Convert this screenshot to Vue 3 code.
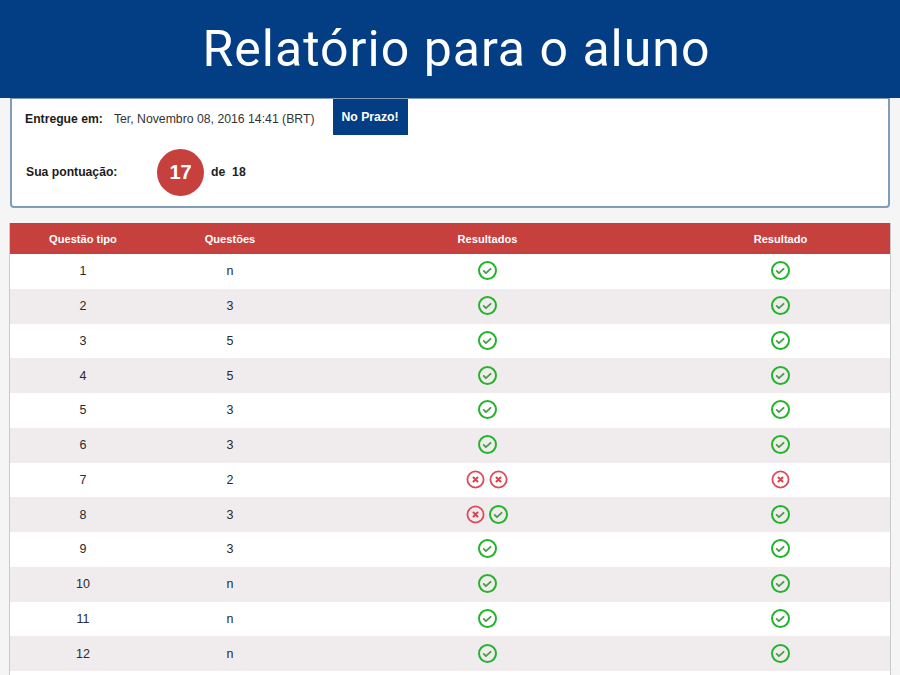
<script setup>
const rows = [
  ['1', 'n', ['ok'], 'ok'],
  ['2', '3', ['ok'], 'ok'],
  ['3', '5', ['ok'], 'ok'],
  ['4', '5', ['ok'], 'ok'],
  ['5', '3', ['ok'], 'ok'],
  ['6', '3', ['ok'], 'ok'],
  ['7', '2', ['bad', 'bad'], 'bad'],
  ['8', '3', ['bad', 'ok'], 'ok'],
  ['9', '3', ['ok'], 'ok'],
  ['10', 'n', ['ok'], 'ok'],
  ['11', 'n', ['ok'], 'ok'],
  ['12', 'n', ['ok'], 'ok']
]
</script>

<template>
  <div class="page">
    <header class="banner">Relatório para o aluno</header>
    <section class="card">
      <div class="line-one">
        <span class="label">Entregue em:</span>
        <span class="date">Ter, Novembro 08, 2016 14:41 (BRT)</span>
        <span class="badge">No Prazo!</span>
      </div>
      <div class="line-two">
        <span class="label score-label">Sua pontuação:</span>
        <span class="score">17</span>
        <span class="total">de&nbsp;&nbsp;18</span>
      </div>
    </section>
    <section class="table">
      <div class="row head">
        <div>Questão tipo</div>
        <div>Questões</div>
        <div>Resultados</div>
        <div>Resultado</div>
      </div>
      <div v-for="r in rows" :key="r[0]" class="row body">
        <div>{{ r[0] }}</div>
        <div>{{ r[1] }}</div>
        <div class="icons" :class="{ pair: r[2].length > 1 }">
          <svg v-for="(s, i) in r[2]" :key="i" class="icon" :class="s" viewBox="0 0 19 19">
            <circle cx="9.5" cy="9.5" :r="s === 'ok' ? 8.5 : 8.1" />
            <path v-if="s === 'ok'" d="M5.7 9.9l2.2 2.2 4.7-4.3" />
            <path v-else class="x" d="M7.5 7.5l4 4M11.5 7.5l-4 4" />
          </svg>
        </div>
        <div class="icons">
          <svg class="icon" :class="r[3]" viewBox="0 0 19 19">
            <circle cx="9.5" cy="9.5" :r="r[3] === 'ok' ? 8.5 : 8.1" />
            <path v-if="r[3] === 'ok'" d="M5.7 9.9l2.2 2.2 4.7-4.3" />
            <path v-else class="x" d="M7.5 7.5l4 4M11.5 7.5l-4 4" />
          </svg>
        </div>
      </div>
    </section>
  </div>
</template>

<style>
html, body { margin: 0; height: 100%; overflow: hidden; background: #f5f5f5; }
</style>

<style scoped>
.page {
  display: flex;
  flex-direction: column;
  width: 900px;
  height: 675px;
  overflow: hidden;
  background: #f5f5f5;
  font-family: "Liberation Sans", Arial, sans-serif;
  color: #222;
}
.banner {
  flex: none;
  box-sizing: border-box;
  height: 98px;
  padding-left: 13px;
  background: #033e84;
  color: #fff;
  font-family: Roboto, sans-serif;
  font-size: 50px;
  line-height: 98px;
  text-align: center;
  letter-spacing: 1px;
}
.card {
  flex: none;
  box-sizing: border-box;
  height: 110px;
  margin: 0 10px 15px;
  background: #fff;
  border: 2px solid #7f9db6;
  border-top-width: 1px;
  border-radius: 0 0 4px 4px;
  padding: 0 0 0 13px;
  font-size: 12.25px;
}
.line-one {
  display: flex;
  align-items: flex-start;
  height: 50px;
}
.label { font-weight: bold; color: #1c1c1c; font-size: 12.2px; }
.line-one .label { margin: 13px 11px 0 0; }
.date { margin-top: 13px; color: #333; }
.badge {
  box-sizing: border-box;
  width: 75px;
  height: 36px;
  margin-left: 18px;
  background: #033e84;
  color: #fff;
  font-weight: bold;
  line-height: 37px;
  text-align: center;
}
.line-two { display: flex; align-items: center; height: 46px; }
.score-label { width: 132px; padding-left: 1px; box-sizing: border-box; }
.score {
  width: 47px;
  height: 47px;
  border-radius: 50%;
  background: #c6403e;
  color: #fff;
  font-size: 20px;
  font-weight: bold;
  line-height: 47px;
  text-align: center;
}
.total { margin-left: 7px; font-weight: bold; }
.table {
  flex: 1;
  box-sizing: border-box;
  width: 882px;
  border-left: 1px solid #c9c9c9;
  border-right: 1px solid #c9c9c9;
  margin: 0 9px;
  background: #fff;
}
.row {
  display: grid;
  grid-template-columns: 146px 148px 367px 219px;
  align-items: center;
  text-align: center;
  font-size: 12.5px;
}
.head {
  height: 31px;
  background: #c6403e;
  color: #fff;
  font-size: 11.1px;
  font-weight: bold;
}
.body { height: 34.75px; color: #2a2a2a; }
.body:nth-child(odd) { background: #f0eced; }
.icons {
  display: flex;
  justify-content: center;
  align-items: center;
  gap: 4.5px;
  margin-bottom: 1px;
}
.icons.pair { padding-right: 1px; }
.icon { display: block; width: 19px; height: 19px; fill: none; stroke-width: 2; }
.icon path { stroke-width: 1.8; stroke-linecap: round; stroke-linejoin: round; }
.icon path.x { stroke-width: 2; }
.bad { stroke-width: 1.8; }
.ok circle { stroke: #22b42a; }
.ok path { stroke: #4a9a4a; }
.bad circle { stroke: #de4a55; }
.bad path { stroke: #d9414c; }
</style>
